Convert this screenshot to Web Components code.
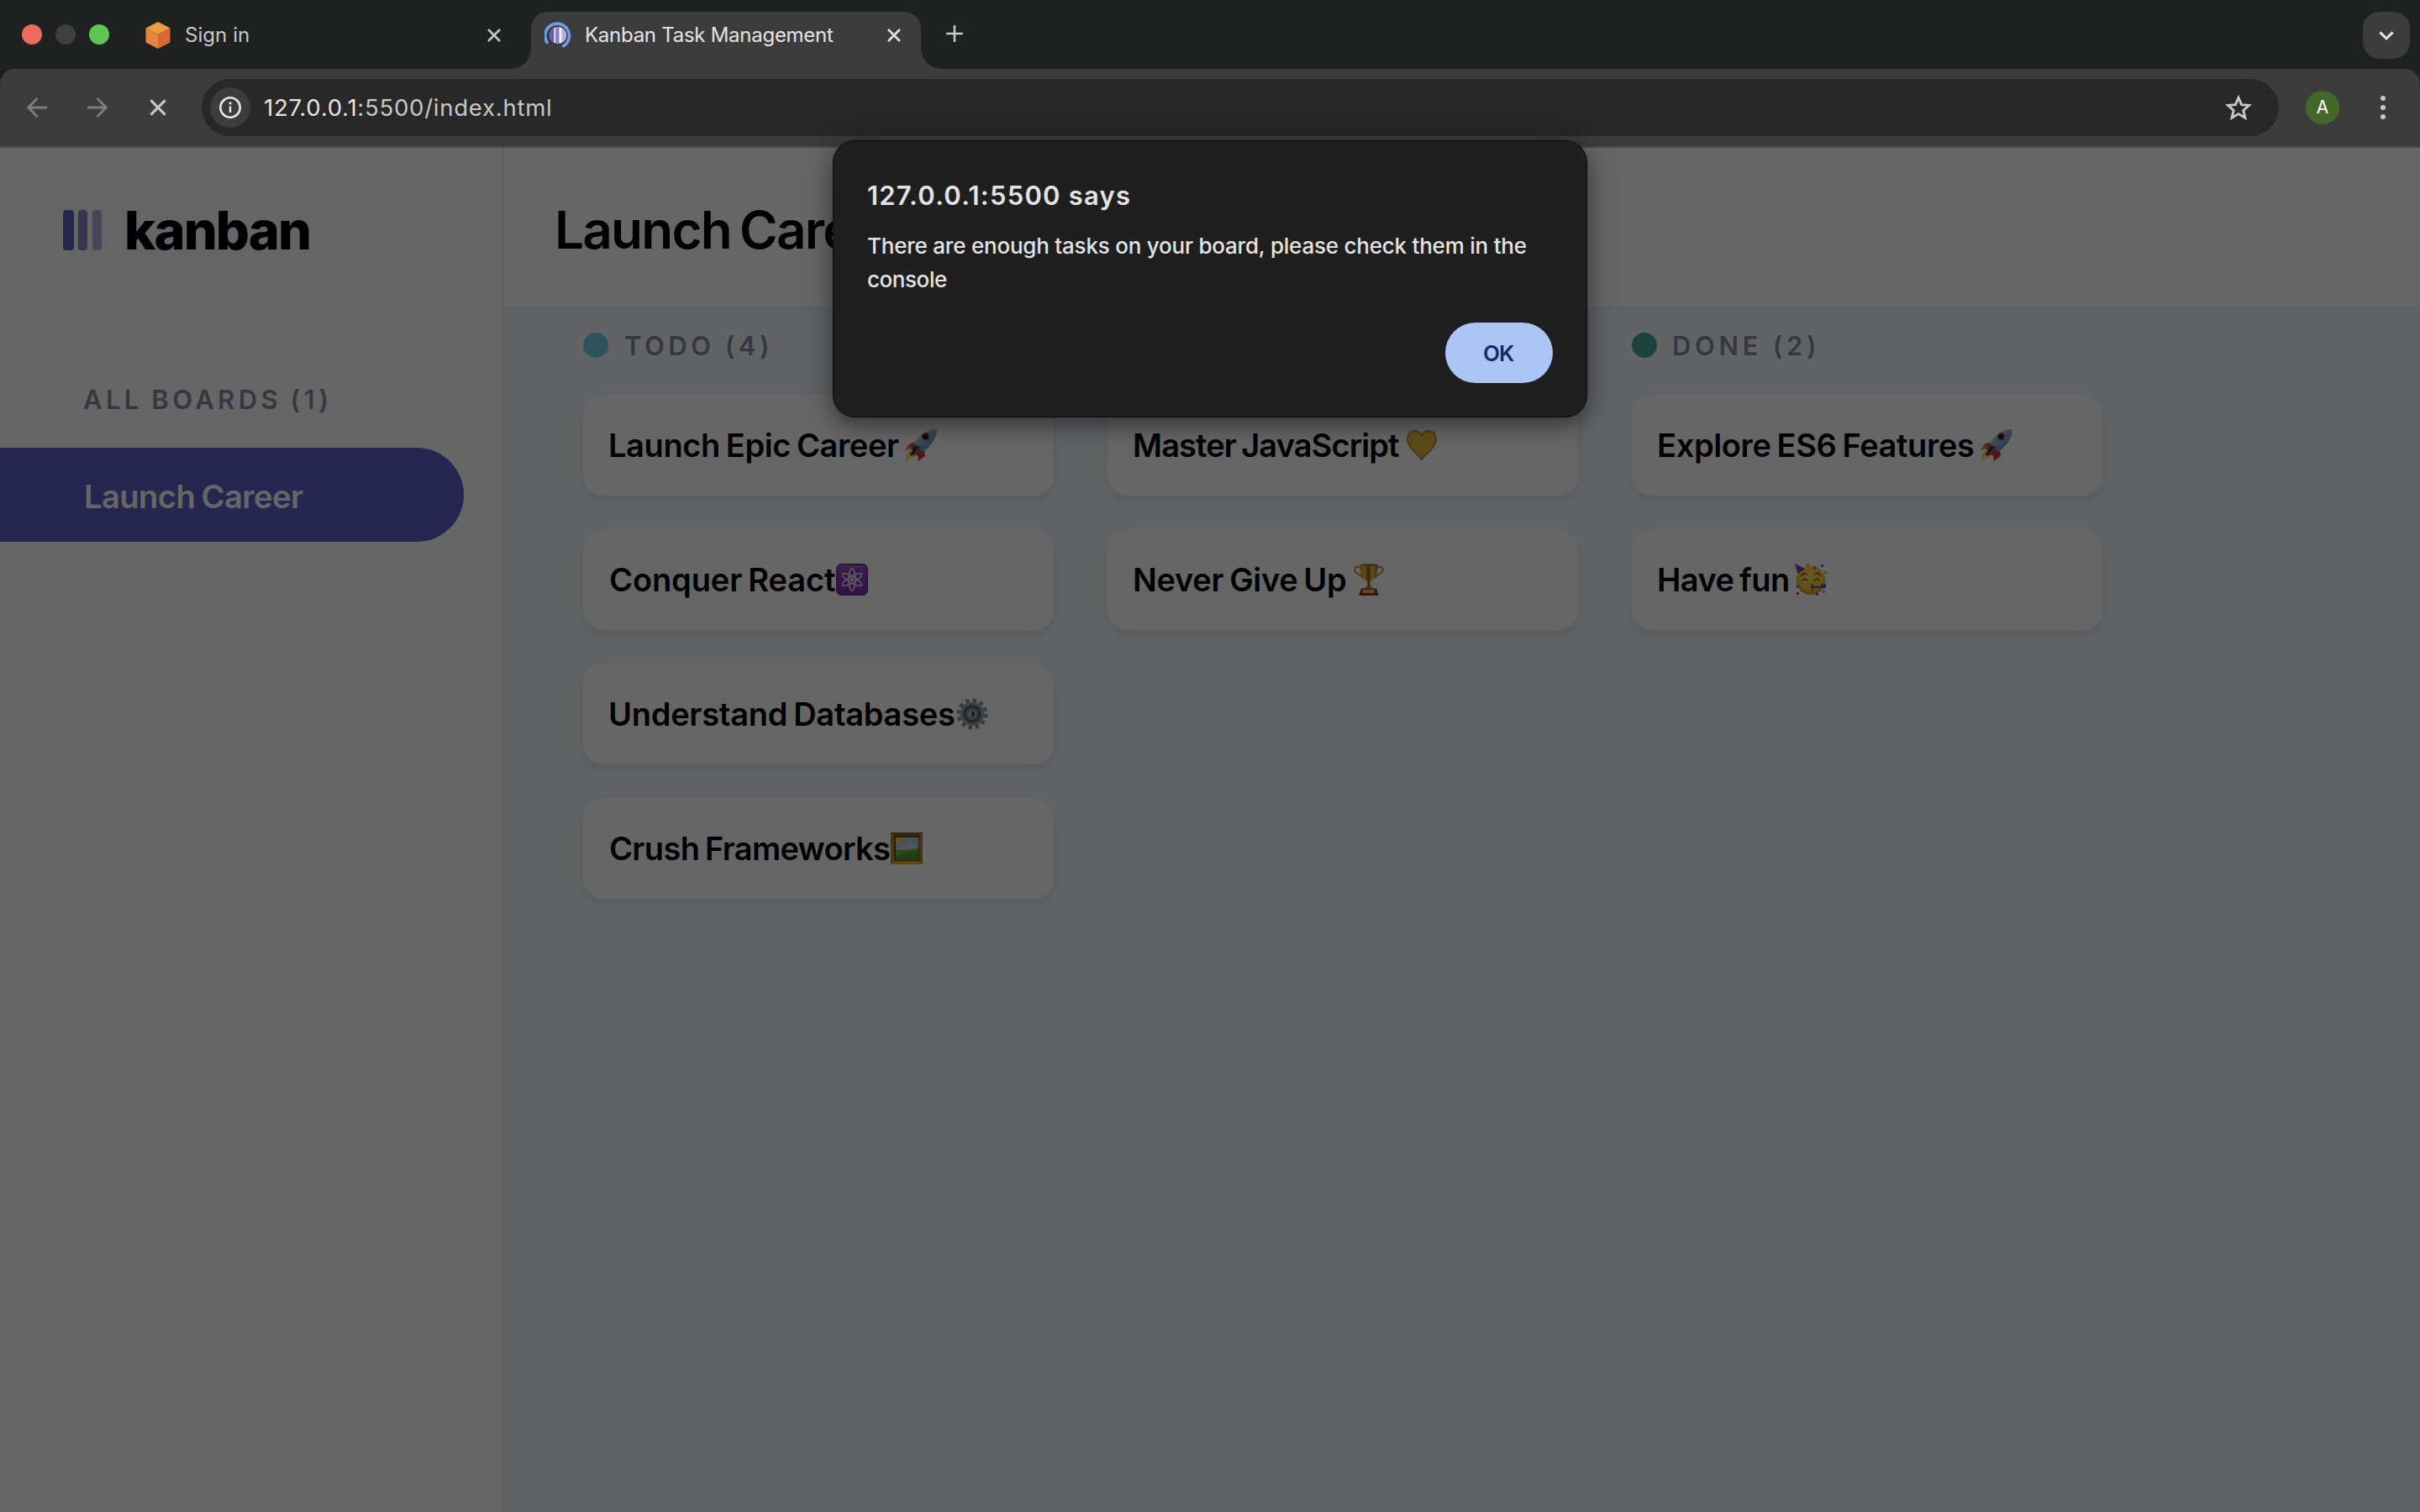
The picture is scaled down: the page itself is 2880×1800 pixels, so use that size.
<!DOCTYPE html>
<html lang="en">
<head>
<meta charset="utf-8">
<title>Kanban Task Management</title>
<style>
html,body{margin:0;width:2880px;height:1800px;overflow:hidden;background:#1f2120}
body{font-family:Inter,"Liberation Sans",sans-serif;-webkit-font-smoothing:antialiased}
</style>
</head>
<body>
<browser-window></browser-window>
<script>
const define = (name, html, setup) => customElements.define(name, class extends HTMLElement {
  connectedCallback() {
    if (this.shadowRoot) return;
    const t = document.createElement('template');
    t.innerHTML = typeof html === 'function' ? html(this) : html;
    this.attachShadow({mode: 'open'}).append(t.content.cloneNode(true));
    if (setup) setup(this);
  }
});

/* Text whose inked width is given by its "w" attribute; tracking absorbs the difference. */
const pen = document.createElement('canvas').getContext('2d');
define('fit-text', '<style>:host{display:block;white-space:pre;line-height:1}</style><slot></slot>', el => {
  const cs = getComputedStyle(el), s = el.textContent, ws = parseFloat(cs.wordSpacing) || 0;
  pen.font = `${cs.fontWeight} ${cs.fontSize} ${cs.fontFamily}`;
  const m = pen.measureText(s), ink = m.actualBoundingBoxLeft + m.actualBoundingBoxRight + ws * (s.split(' ').length - 1);
  const ls = (parseFloat(el.getAttribute('w')) - ink) / (s.length - 1);
  el.style.letterSpacing = ls + 'px';
  el.style.marginLeft = m.actualBoundingBoxLeft + 'px';
  el.style.marginRight = -(ls + m.width - m.actualBoundingBoxRight) + 'px';
});

const icons = {
  close: ['0 0 18 18', '<path d="M2 2 16 16M16 2 2 16" fill="none" stroke="currentColor" stroke-width="2.5"/>'],
  plus: ['0 0 20 20', '<path d="M10 0V20M0 10H20" fill="none" stroke="currentColor" stroke-width="2.6"/>'],
  back: ['0 0 24 24', '<path d="M24 12H2.5M12.5 1 1.7 12 12.5 23" fill="none" stroke="currentColor" stroke-width="2.8"/>'],
  forward: ['0 0 24 24', '<path d="M0 12H21.5M11.5 1 22.3 12 11.5 23" fill="none" stroke="currentColor" stroke-width="2.8"/>'],
  info: ['0 0 26 26', '<circle cx="13" cy="13" r="11.7" fill="none" stroke="currentColor" stroke-width="2.6"/><path d="M13 11.4V19" stroke="currentColor" stroke-width="2.5"/><circle cx="13" cy="7.9" r="1.6" fill="currentColor"/>'],
  star: ['0 0 32 31', '<path d="M16 3.2 19.6 11.6 28.6 12.4 21.8 18.4 23.9 27.3 16 22.6 8.1 27.3 10.2 18.4 3.4 12.4 12.4 11.6Z" fill="none" stroke="currentColor" stroke-width="2.9"/>'],
  dots: ['0 0 6 28', '<g fill="currentColor"><circle cx="3" cy="3" r="3"/><circle cx="3" cy="14" r="3"/><circle cx="3" cy="25" r="3"/></g>'],
  chevron: ['0 0 18 11', '<path d="M1.4 1.4 9 8.8 16.6 1.4" fill="none" stroke="currentColor" stroke-width="3"/>'],
  cube: ['0 0 30 32', '<path d="M15 0 29.5 7.5 15 15 .5 7.5Z" fill="#ef9d43"/><path d="M.5 7.5 15 15V32L.5 24.5Z" fill="#e6863c"/><path d="M29.5 7.5 15 15V32L29.5 24.5Z" fill="#d96832"/>'],
  kanban: ['0 0 32 32', '<defs><clipPath id="c"><circle cx="16" cy="16" r="10"/></clipPath></defs><path d="M2.9 24.3A14.4 14.4 0 1 1 22.6 28.8" fill="none" stroke="#6f9df1" stroke-width="3.6" stroke-linecap="round"/><g clip-path="url(#c)"><path fill="#f2f1fa" d="M6 6h20v20H6z"/><path fill="#635bbd" d="M6 6h5.3v20H6z"/><path fill="#8983cf" d="M13 6h4.5v20H13z"/><path fill="#b3afdf" d="M20.4 6H26v20h-5.6z"/></g>'],
  rocket: ['0 0 38 38', '<defs><linearGradient id="b" x1="0" y1="0" x2="1" y2="1"><stop stop-color="#e4edf7"/><stop offset=".45" stop-color="#8fb5dc"/><stop offset="1" stop-color="#47719f"/></linearGradient></defs><path d="M12 15 4.500 18 0 25 9 22.500Z" fill="#e8472b"/><path d="M0 25 4 18.500 7 22.800Z" fill="#f58a33"/><path d="M23 25 24 32 16 38 15 30Z" fill="#de3324"/><path d="M8 24 3 29 1 37 8 34 13 31Z" fill="#ffc73a"/><path d="M9 26 4 32 3 36 11 30Z" fill="#fff07a"/><path d="M38 0C27 0 18 6 13 14L7 23.500 14 31 24 25C32 18 38 9 38 0Z" fill="url(#b)"/><path d="M11 17 7 23.500 14 31 21 27Z" fill="#5a616e"/><path d="M15 20 7 31" stroke="#2c2325" stroke-width="2.800"/><circle cx="24.500" cy="8.700" r="4.500" fill="#b73a34"/><circle cx="24.500" cy="8.700" r="2.900" fill="#151b2b"/><path d="M18 20 10 31" stroke="#e2432a" stroke-width="2.600"/>'],
  atom: ['0 0 38 38', '<defs><linearGradient id="b" x1="0" y1="0" x2="0" y2="1"><stop stop-color="#a46bd1"/><stop offset=".22" stop-color="#8440b8"/><stop offset="1" stop-color="#8130b0"/></linearGradient></defs><rect x=".7" y=".7" width="36.600" height="36.600" rx="6" fill="url(#b)" stroke="#602a88" stroke-width="1.400"/><g fill="none" stroke="#efe3f7" stroke-width="1.600"><ellipse cx="19" cy="19" rx="3.900" ry="13.200"/><ellipse cx="19" cy="19" rx="3.900" ry="13.200" transform="rotate(60 19 19)"/><ellipse cx="19" cy="19" rx="3.900" ry="13.200" transform="rotate(-60 19 19)"/></g><circle cx="19" cy="19" r="2.300" fill="#efe3f7"/>'],
  gear: ['0 0 38 38', '<circle cx="19" cy="19" r="16" fill="none" stroke="#8b919b" stroke-width="5" stroke-dasharray="4.400 3.978"/><circle cx="19" cy="19" r="11.800" fill="none" stroke="#8b919b" stroke-width="5"/><circle cx="19" cy="19" r="10.200" fill="#7f858e"/><circle cx="19" cy="19" r="13.300" fill="none" stroke="#adb3bc" stroke-width="1.300"/><circle cx="19" cy="19" r="9" fill="none" stroke="#484e58" stroke-width="1.800"/><circle cx="19" cy="19" r="5" fill="#b6bbc3"/><path d="M17.500 15.800a3.400 3.400 0 1 1 0 6.400 4.500 4.500 0 0 0 0-6.400Z" fill="#33373e"/>'],
  frame: ['0 0 38 38', '<path d="M0 0h38v38H0Z" fill="#b9852a"/><path d="M0 0h38L33 5H5Z" fill="#8a5f1d"/><path d="M0 38h38l-5-5H5Z" fill="#dcab3a"/><path d="M4 4h30v30H4Z" fill="#694519"/><path d="M6 6h27v27H6Z" fill="#a8cfe9"/><circle cx="10.500" cy="10" r="3.800" fill="#ffd12e"/><path d="M12 18c0-4 5-5 6-2 2-8 9-7 8 0 5-2 7 0 7 3v2H9c0-2 1-3 3-3Z" fill="#cfd6dc"/><path d="M6 21c8-1 15 1 27-3v15H6Z" fill="#76ad42"/><path d="M6 28c10 0 16-6 27-6v11H6Z" fill="#559b33"/>'],
  heart: ['0 0 36 36', '<defs><radialGradient id="b" cx=".5" cy=".3" r=".75"><stop stop-color="#efc74a"/><stop offset=".7" stop-color="#e8b93c"/><stop offset="1" stop-color="#cb7524"/></radialGradient></defs><path d="M18 35.500C14 29 1 21 .8 11 .6 4 5 .6 9.500.6 14 .6 17 3.500 18 7 19 3.500 22 .6 26.500.6 31 .6 35.400 4 35.200 11 35 21 22 29 18 35.500Z" fill="url(#b)" stroke="#bb6a25" stroke-width="1.200"/>'],
  trophy: ['0 0 36 38', '<defs><linearGradient id="b"><stop stop-color="#c98d22"/><stop offset=".25" stop-color="#ecc04e"/><stop offset=".5" stop-color="#8d5b13"/><stop offset=".68" stop-color="#eec75c"/><stop offset="1" stop-color="#a26a1a"/></linearGradient></defs><path d="M8.500 5C5 2.500 1 4 1.200 7.500 1.500 13 8 11 10.500 17M27.500 5C31 2.500 35 4 34.800 7.500 34.500 13 28 11 25.500 17" fill="none" stroke="#c58d2c" stroke-width="2"/><path d="M7.500 1C7.500 13 10 18.500 16 21L16.500 26 12 29.500H24L19.500 26 20 21C26 18.500 28.500 13 28.500 1Z" fill="url(#b)"/><ellipse cx="18" cy="1.500" rx="10.600" ry="1.500" fill="#a87524"/><path d="M9 29.500H27L29 36H7Z" fill="#8c3d1f"/><path d="M11 31H25V35H11Z" fill="#dfb968"/><path d="M6.500 35.500h23V38h-23Z" fill="#87351c"/>'],
  party: ['0 0 38 38', '<defs><radialGradient id="b" cx=".5" cy=".4" r=".6"><stop stop-color="#ffdf57"/><stop offset=".7" stop-color="#f9c63b"/><stop offset="1" stop-color="#d88b22"/></radialGradient></defs><circle cx="19" cy="20" r="17.300" fill="url(#b)"/><path d="M0 0 12 6 3.500 12Z" fill="#4a3fa4"/><path d="M4 2 1.500 5M8 4 3 9" stroke="#d5479a" stroke-width="1.800"/><g fill="none" stroke="#6e441c" stroke-width="1.500" stroke-linecap="round"><path d="M8 14q3-4 6-1M24 12.500q3-3 6 1M9 20q3-3 6 0M23 20q3-3 6 0"/><path d="M20 25q3 1 0 3 3 1 0 3.500"/></g><path d="M21 28H31" stroke="#3d55c5" stroke-width="2.200"/><path d="M31 28q-1-4 4-4 3 0 2 4-3 3-6 0Z" fill="#5b50bd"/><g fill="#4a6fd8"><path d="M31 1h3v3h-3ZM2 26h3v3H2ZM25 35h3v3h-3Z"/></g><g fill="#d83e5c"><path d="M22 3.500h3v3h-3ZM2 34h3v3H2Z"/></g><g fill="#e8a42c"><path d="M14 0h3v3h-3ZM33 32h3v3h-3ZM35 9h3v3h-3Z"/></g>']
};
define('ui-icon', el => {
  const [box, body] = icons[el.getAttribute('name')];
  const [, , w, h] = box.split(' ');
  return `<style>:host{display:block;flex:none;width:${w}px;height:${h}px}svg{display:block;width:100%;height:100%}</style><svg viewBox="${box}">${body}</svg>`;
});

define('browser-tab', el => `<style>
:host{display:flex;box-sizing:border-box;width:464px;height:68px;padding:12px 23px 0 20px;align-items:flex-start;position:relative;color:#c7c7c7;font-size:24px}
:host([active]){background:#3c3c3c;color:#e3e3e3;border-radius:20px 20px 0 0;padding-left:16px}
:host([active])::before,:host([active])::after{content:"";position:absolute;bottom:0;width:24px;height:24px}
:host([active])::before{left:-24px;background:radial-gradient(circle at 0 0,transparent 23.500px,#3c3c3c 24px)}
:host([active])::after{right:-24px;background:radial-gradient(circle at 100% 0,transparent 23.500px,#3c3c3c 24px)}
.grow{flex:1}
.t{padding:4px 0 0 18px}
ui-icon[name=close]{margin-top:7px}
</style><slot name="icon"></slot><div class="t"><slot></slot></div><div class="grow"></div><ui-icon name="close"></ui-icon>`);

define('tab-strip', `<style>
:host{display:flex;height:82px;box-sizing:border-box;padding:14px 12px 0 26px;background:#1f2120}
.lights{display:flex;gap:16px;padding-top:15px;width:127px;flex:none}
.lights i{width:24px;height:24px;border-radius:50%;background:#ed6a5e}
.lights i:nth-child(2){background:#3f3f3f}.lights i:nth-child(3){background:#61c554}
browser-tab:first-of-type{width:467px;margin-right:12px}
.plus{padding:16px 0 0 30px;color:#c7c7c7;flex:1}
.more{width:56px;height:56px;border-radius:20px;background:#3c3c3c;color:#e3e3e3;display:flex;align-items:center;justify-content:center}
</style>
<div class="lights"><i></i><i></i><i></i></div>
<browser-tab><ui-icon name="cube" slot="icon"></ui-icon><fit-text w="75">Sign in</fit-text></browser-tab>
<browser-tab active><ui-icon name="kanban" slot="icon"></ui-icon><fit-text w="294">Kanban Task Management</fit-text></browser-tab>
<div class="plus"><ui-icon name="plus"></ui-icon></div>
<div class="more"><ui-icon name="chevron"></ui-icon></div>`);

define('tool-bar', `<style>
:host{display:flex;align-items:center;box-sizing:border-box;height:94px;padding:0 41px 0 32px;background:#3c3c3c;border-bottom:2px solid #484848;border-radius:18px 18px 0 0;color:#c7c7c7}
ui-icon[name=back],ui-icon[name=forward]{color:#7c7c7c;margin-right:48px}
ui-icon[name=close]{width:22px;height:22px;margin:0 41px 0 1px}
.omni{display:flex;align-items:center;flex:1;height:68px;border-radius:34px;background:#282828;padding:0 32px 0 10px}
.site{width:48px;height:48px;border-radius:50%;background:#3c3c3c;color:#e3e3e3;display:flex;align-items:center;justify-content:center;margin-right:17px}
.url{font-size:27.500px;flex:1}.url fit-text{display:inline-block}
.host{color:#e3e3e3}
.av{width:40px;height:40px;border-radius:50%;background:#42692a;color:#fff;font:21px/40px Inter,sans-serif;text-align:center;margin:0 49px 0 32px}
</style>
<ui-icon name="back"></ui-icon><ui-icon name="forward"></ui-icon><ui-icon name="close"></ui-icon>
<div class="omni"><div class="site"><ui-icon name="info"></ui-icon></div>
<div class="url"><fit-text w="340"><span class="host">127.0.0.1</span>:5500/index.html</fit-text></div>
<ui-icon name="star"></ui-icon></div>
<div class="av">A</div><ui-icon name="dots"></ui-icon>`);

define('side-bar', `<style>
:host{display:block;box-sizing:border-box;width:600px;flex:none;background:#fff;border-right:2px solid #ebebf2}
.logo{display:flex;align-items:center;box-sizing:border-box;width:303px;height:64px;margin:67px 0 0 68px;padding:0 0 2px 7px;background:#fcfcfc;color:#02000a;font-size:63px;font-weight:800}
.logo i{width:13px;height:48px;border-radius:4px;background:#635fc7;margin-right:5px}
.logo i+i{width:11px;background:#8b88c8;margin-right:6px}.logo i+i+i{background:#b0aeda;margin-right:30px}
h4{margin:153px 0 42px 99px;font-size:31px;font-weight:600;color:#828fa3;height:31px}
.pill{display:flex;align-items:center;box-sizing:border-box;width:552px;height:112px;border-radius:0 56px 56px 0;background:#635fc7;color:#fff;font-size:38px;font-weight:600;padding:3px 0 0 102px}
fit-text{word-spacing:-.05em}
</style>
<div class="logo"><i></i><i></i><i></i><fit-text w="217">kanban</fit-text></div>
<h4><fit-text w="289">ALL BOARDS (1)</fit-text></h4>
<div class="pill"><fit-text w="259">Launch Career</fit-text></div>`);

define('task-card', el => `<style>
:host{display:flex;align-items:center;box-sizing:border-box;width:560px;height:120px;padding:0 32px;border-radius:24px;background:#fff;color:#000;font-size:38px;font-weight:600;box-shadow:0 8px 12px rgba(54,78,126,.1)}
fit-text{word-spacing:-.06em}
ui-icon{margin-left:${el.getAttribute('gap')}px}
</style><fit-text w="${el.getAttribute('w')}">${el.textContent}</fit-text><ui-icon name="${el.getAttribute('icon')}"></ui-icon>`);

define('board-column', el => `<style>
:host{display:flex;flex-direction:column;gap:40px;width:560px}
header{display:flex;align-items:center;height:30px;margin-bottom:4px;color:#828fa3;font-size:31px;font-weight:600}
i{width:30px;height:30px;border-radius:50%;margin-right:20px;background:${el.getAttribute('dot') || 'transparent'}}
</style><header><i></i><slot name="title"></slot></header><slot></slot>`);

define('board-page', `<style>
:host{display:flex;flex:1;background:#f4f7fd}
main{flex:1}
.top{height:192px;box-sizing:border-box;background:#fff;border-bottom:2px solid #e4ebfa;padding:6px 0 0 64px;display:flex;align-items:center;font-size:62px;font-weight:600;color:#000;word-spacing:-.06em}
.cols{display:flex;gap:64px;padding:28px 0 0 94px}
</style>
<side-bar></side-bar>
<main><div class="top"><fit-text w="409">Launch Career</fit-text></div>
<div class="cols">
<board-column dot="#73cdea"><fit-text slot="title" w="169">TODO (4)</fit-text>
<task-card w="344" gap="7" icon="rocket">Launch Epic Career</task-card>
<task-card w="268" gap="1" icon="atom">Conquer React</task-card>
<task-card w="410" gap="2" icon="gear">Understand Databases</task-card>
<task-card w="333" gap="1" icon="frame">Crush Frameworks</task-card></board-column>
<board-column>
<task-card w="315" gap="9" icon="heart">Master JavaScript</task-card>
<task-card w="252" gap="9" icon="trophy">Never Give Up</task-card></board-column>
<board-column dot="#4da898"><fit-text slot="title" w="167">DONE (2)</fit-text>
<task-card w="375" gap="8" icon="rocket">Explore ES6 Features</task-card>
<task-card w="154" gap="8" icon="party">Have fun</task-card></board-column>
</div></main>`);

define('alert-dialog', `<style>
:host{display:flex;flex-direction:column;box-sizing:border-box;width:898px;height:330px;padding:49px 40px 40px 41px;border:1px solid #0b0b0b;border-radius:26px;background:#1f1f1f;box-shadow:0 6px 36px rgba(0,0,0,.4),0 10px 16px rgba(0,0,0,.16);color:#e3e3e3}
h2{margin:0 0 32px;font-size:31px;font-weight:600;height:31px}
p{margin:0;font-size:26px;font-weight:500;display:flex;flex-direction:column;gap:14px}
button{align-self:flex-end;margin-top:auto;width:128px;height:72px;flex:none;border:0;border-radius:36px;background:#acc5f6;color:#0e2c6d;font:600 26px Inter,sans-serif;display:flex;align-items:center;justify-content:center;padding:2px 0 0}
</style>
<h2><fit-text w="311">127.0.0.1:5500 says</fit-text></h2>
<p><fit-text w="784">There are enough tasks on your board, please check them in the</fit-text><fit-text w="94">console</fit-text></p>
<button><fit-text w="36">OK</fit-text></button>`);

define('browser-window', `<style>
:host{display:flex;flex-direction:column;width:2880px;height:1800px;position:relative;background:#1f2120}
.view{flex:1;display:flex;position:relative}
.view::after{content:"";position:absolute;inset:0;background:rgba(0,0,0,.6)}
alert-dialog{position:absolute;left:991px;top:167px}
</style><tab-strip></tab-strip><tool-bar></tool-bar>
<div class="view"><board-page></board-page></div><alert-dialog></alert-dialog>`);
</script>
</body>
</html>
